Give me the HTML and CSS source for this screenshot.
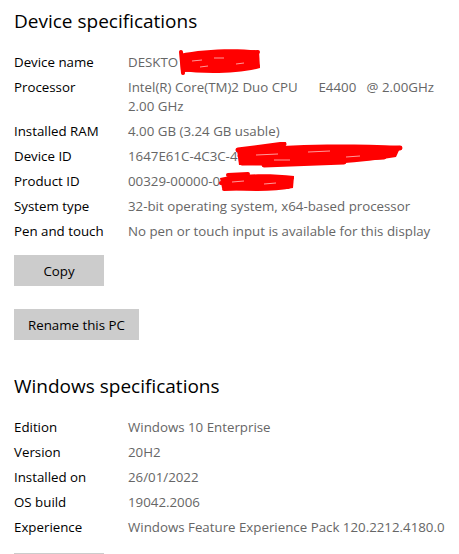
FILE: index.html
```html
<html lang="en">
    <head>
        <title>About</title>
        <link rel="stylesheet" href="styles.css">
    </head>
    <body>
        <section class="specs">
            <h2>Device specifications</h2>
            <div class="rows">
                <div class="label">Device name</div>
                <div class="value">DESKTO
                    <svg class="scribble" style="left: 50px; top: -5px;" width="84" height="27" viewBox="0 0 84 27">
                        <path d="M2 6 C25 1, 60 0, 81 3 L82 20 C60 26, 25 26, 3 23 Z" fill="#ff0000"/>
                        <path d="M3 4 L5 25 M6 8 L80 4 M6 22 L80 18" stroke="#ff0000" stroke-width="4" fill="none" stroke-linecap="round"/>
                        <path d="M14 13 L24 12 M36 10 L46 10 M58 16 L66 15 M22 19 L30 18" stroke="#ff9a9a" stroke-width="1" fill="none"/>
                    </svg>
                </div>
                <div class="label">Processor</div>
                <div class="value">Intel(R) Core(TM)2 Duo CPU&nbsp;&nbsp;&nbsp;&nbsp;&nbsp;&nbsp;E4400&nbsp;&nbsp;&nbsp;@ 2.00GHz<br>2.00 GHz</div>
                <div class="label">Installed RAM</div>
                <div class="value">4.00 GB (3.24 GB usable)</div>
                <div class="label">Device ID</div>
                <div class="value">1647E61C-4C3C-4
                    <svg class="scribble" style="left: 106px; top: -5px;" width="170" height="26" viewBox="0 0 170 26">
                        <path d="M3 8 C40 3, 100 1, 167 4 L162 15 C120 22, 60 25, 5 23 Z" fill="#ff0000"/>
                        <path d="M4 8 L50 2 M6 14 L166 6 M8 21 L150 15 M30 23 L110 20" stroke="#ff0000" stroke-width="5" fill="none" stroke-linecap="round"/>
                        <path d="M22 13 L44 12 M74 10 L96 9 M112 15 L126 14 M40 18 L56 18" stroke="#ff9a9a" stroke-width="1" fill="none"/>
                    </svg>
                </div>
                <div class="label">Product ID</div>
                <div class="value">00329-00000-0
                    <svg class="scribble" style="left: 90px; top: -1px;" width="78" height="22" viewBox="0 0 78 22">
                        <path d="M2 7 C20 3, 50 2, 76 5 L75 17 C55 21, 25 21, 4 17 Z" fill="#ff0000"/>
                        <path d="M3 12 L74 7 M6 18 L70 16 M10 4 L30 3" stroke="#ff0000" stroke-width="4" fill="none" stroke-linecap="round"/>
                        <path d="M14 11 L26 10 M46 13 L58 12" stroke="#ff9a9a" stroke-width="1" fill="none"/>
                    </svg>
                </div>
                <div class="label">System type</div>
                <div class="value">32-bit operating system, x64-based processor</div>
                <div class="label">Pen and touch</div>
                <div class="value">No pen or touch input is available for this display</div>
            </div>
            <button class="copy" type="button">Copy</button>
            <button class="rename" type="button">Rename this PC</button>
        </section>

        <section class="specs">
            <h2>Windows specifications</h2>
            <div class="rows">
                <div class="label">Edition</div>
                <div class="value">Windows 10 Enterprise</div>
                <div class="label">Version</div>
                <div class="value">20H2</div>
                <div class="label">Installed on</div>
                <div class="value">26/01/2022</div>
                <div class="label">OS build</div>
                <div class="value">19042.2006</div>
                <div class="label">Experience</div>
                <div class="value">Windows Feature Experience Pack 120.2212.4180.0</div>
            </div>
            <button class="copy" type="button">Copy</button>
        </section>
    </body>
</html>
```

FILE: styles.css
```css
body {
    margin: 0;
    padding: 0 14px;
    background-color: #fff;
    font-family: "Open Sans", "Noto Sans", sans-serif;
    color: #000;
    overflow: hidden;
}
.specs {
    display: flex;
    flex-direction: column;
    align-items: flex-start;
}
.specs h2 {
    margin: 7px 0 0 0;
    font-size: 19px;
    font-weight: normal;
    line-height: 28px;
    height: 28px;
}
.rows {
    display: grid;
    grid-template-columns: 114px 1fr;
    row-gap: 6px;
    margin-top: 18px;
    font-size: 13.3px;
    line-height: 19px;
}
.label {
    color: #000;
}
.value {
    position: relative;
    color: #666;
}
.scribble {
    position: absolute;
}
button {
    font-family: "Open Sans", "Noto Sans", sans-serif;
    font-size: 13.3px;
    height: 31px;
    border: none;
    border-radius: 0;
    background-color: #cccccc;
    color: #000;
    padding: 0 14px;
}
.copy {
    width: 90px;
    margin-top: 14px;
}
.rename {
    margin-top: 23px;
}
.specs + .specs h2 {
    margin-top: 32px;
}
.specs + .specs .copy {
    margin-top: 16px;
}
```
